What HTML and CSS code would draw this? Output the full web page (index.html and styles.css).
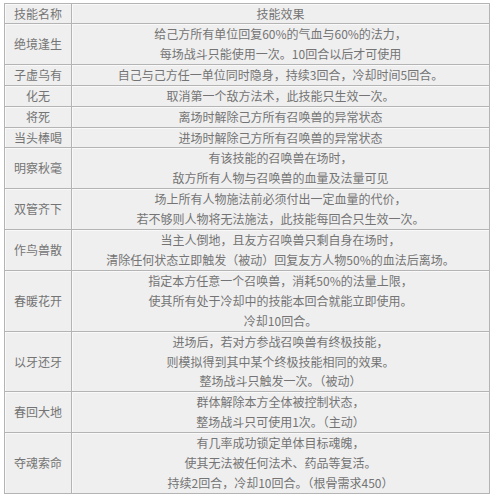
FILE: index.html
```html
<!DOCTYPE html>
<html lang="zh">
<head>
<meta charset="utf-8">
<link rel="stylesheet" href="styles.css">
</head>
<body>
<table class="skills">
<tr class="head"><td class="name">技能名称</td><td>技能效果</td></tr>
<tr><td class="name">绝境逢生</td><td>给己方所有单位回复60%的气血与60%的法力，<br>每场战斗只能使用一次。10回合以后才可使用</td></tr>
<tr><td class="name">子虚乌有</td><td>自己与己方任一单位同时隐身，持续3回合，冷却时间5回合。</td></tr>
<tr><td class="name">化无</td><td>取消第一个敌方法术，此技能只生效一次。</td></tr>
<tr><td class="name">将死</td><td>离场时解除己方所有召唤兽的异常状态</td></tr>
<tr><td class="name">当头棒喝</td><td>进场时解除己方所有召唤兽的异常状态</td></tr>
<tr><td class="name">明察秋毫</td><td>有该技能的召唤兽在场时，<br>敌方所有人物与召唤兽的血量及法量可见</td></tr>
<tr><td class="name">双管齐下</td><td>场上所有人物施法前必须付出一定血量的代价，<br>若不够则人物将无法施法，此技能每回合只生效一次。</td></tr>
<tr><td class="name">作鸟兽散</td><td>当主人倒地，且友方召唤兽只剩自身在场时，<br>清除任何状态立即触发（被动）回复友方人物50%的血法后离场。</td></tr>
<tr><td class="name">春暖花开</td><td>指定本方任意一个召唤兽，消耗50%的法量上限，<br>使其所有处于冷却中的技能本回合就能立即使用。<br>冷却10回合。</td></tr>
<tr><td class="name">以牙还牙</td><td>进场后，若对方参战召唤兽有终极技能，<br>则模拟得到其中某个终极技能相同的效果。<br>整场战斗只触发一次。（被动）</td></tr>
<tr><td class="name">春回大地</td><td>群体解除本方全体被控制状态，<br>整场战斗只可使用1次。（主动）</td></tr>
<tr><td class="name">夺魂索命</td><td>有几率成功锁定单体目标魂魄，<br>使其无法被任何法术、药品等复活。<br>持续2回合，冷却10回合。（根骨需求450）</td></tr>
</table>
</body>
</html>
```
FILE: styles.css
```css
html, body {
  margin: 0;
  padding: 0;
  background: #ffffff;
}
body {
  padding: 3px 4px 0 4px;
  font-family: "Noto Sans CJK SC", "DejaVu Sans", sans-serif;
}
.skills {
  width: 486px;
  border-collapse: collapse;
  border: 1px solid #a9a9a9;
  background: #efefef;
  color: #747474;
  font-size: 12px;
  line-height: 19.9px;
}
.skills td {
  border: 1px solid #b4b4b4;
  text-align: center;
  vertical-align: middle;
  padding: 0;
  box-shadow: inset 1px 1px 0 #f9f9f9;
  white-space: nowrap;
}
.skills td.name {
  width: 66px;
}
.skills .head td {
  line-height: 19px;
}
```
